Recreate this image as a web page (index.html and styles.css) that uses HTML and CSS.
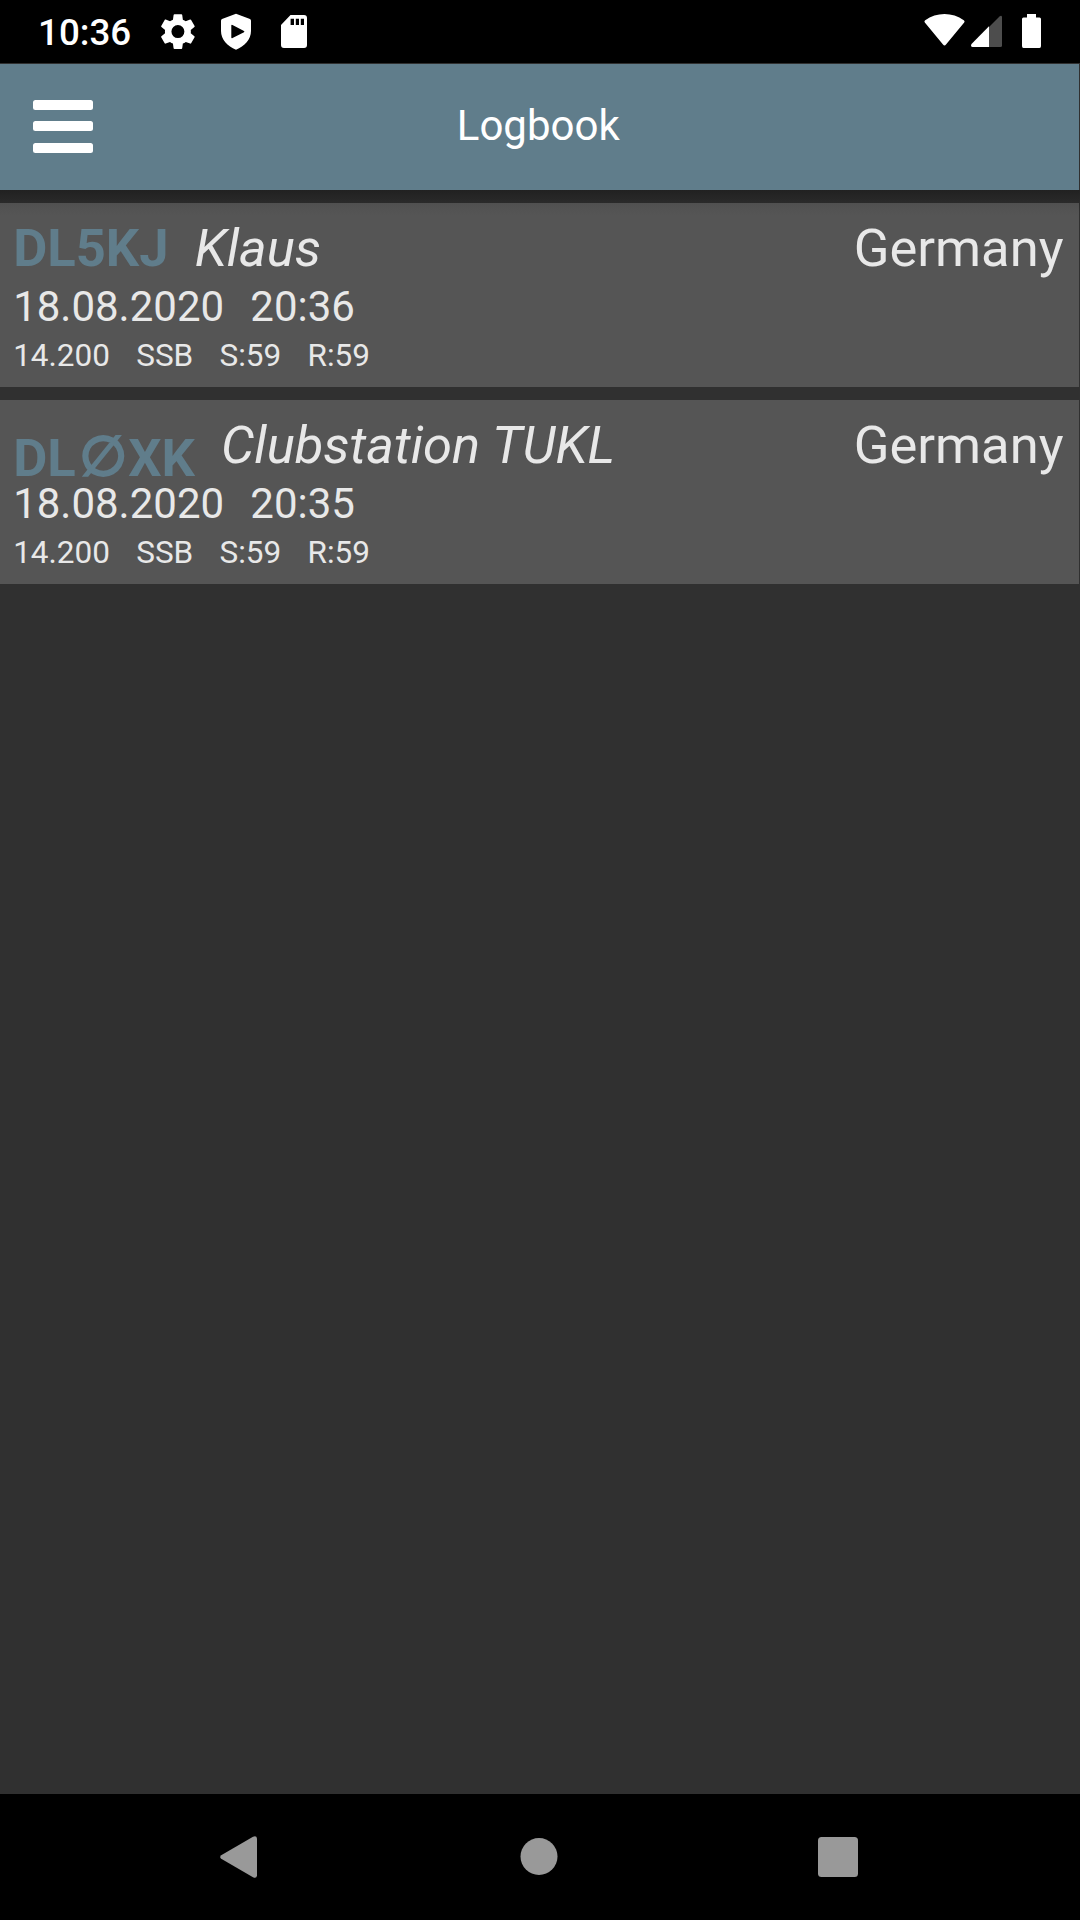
FILE: index.html
```html
<!DOCTYPE html>
<html lang="en">
<head>
<meta charset="utf-8">
<title>Logbook</title>
<link rel="stylesheet" href="styles.css">
</head>
<body>
<div class="status">
  <span class="clock">10:36</span>
  <svg class="icons-left" width="148" height="63" viewBox="160 0 148 63">
    <g transform="translate(156.3 10) scale(1.8)">
      <path fill="#fff" d="M19.14 12.94c.04-.3.06-.61.06-.94 0-.32-.02-.64-.07-.94l2.03-1.58a.49.49 0 0 0 .12-.61l-1.92-3.32a.488.488 0 0 0-.59-.22l-2.39.96c-.5-.38-1.03-.7-1.62-.94l-.36-2.54a.484.484 0 0 0-.48-.41h-3.84c-.24 0-.43.17-.47.41l-.36 2.54c-.59.24-1.13.57-1.62.94l-2.39-.96c-.22-.08-.47 0-.59.22L2.74 8.87c-.12.21-.08.47.12.61l2.03 1.58c-.05.3-.09.63-.09.94s.02.64.07.94l-2.03 1.58a.49.49 0 0 0-.12.61l1.92 3.32c.12.22.37.29.59.22l2.39-.96c.5.38 1.03.7 1.62.94l.36 2.54c.05.24.24.41.48.41h3.84c.24 0 .44-.17.47-.41l.36-2.54c.59-.24 1.13-.56 1.62-.94l2.39.96c.22.08.47 0 .59-.22l1.92-3.32c.12-.22.07-.47-.12-.61zM12 15.6A3.6 3.6 0 1 1 12 8.4a3.6 3.6 0 0 1 0 7.2z"/>
    </g>
    <path fill="#fff" fill-rule="evenodd" d="M236 13.7 250 19.1Q251 19.6 251 20.7V31C251 39.500 244.500 46.500 236 49.700 227.500 46.500 221 39.500 221 31V20.700Q221 19.600 222 19.100ZM231.300 25.300V37.500Q231.500 38.600 232.500 38L244 32.200Q244.800 31.600 244 31L232.500 25Q231.500 24.500 231.300 25.300Z"/>
    <path fill="#fff" fill-rule="evenodd" d="M290.500 15H304Q307 15 307 18V45Q307 48 304 48H284Q281 48 281 45V25ZM290.600 18.700V25H294V18.700ZM295.800 18.700V25H299V18.700ZM300.800 18.700V25H304V18.700Z"/>
  </svg>
  <svg class="icons-right" width="120" height="63" viewBox="922 0 120 63">
    <path fill="#fff" d="M924.800 22.500Q923.800 21.200 925.200 20.200C936.500 12 952.500 12 963.800 20.200Q965.200 21.200 964.200 22.500L946 44.500Q944.500 46.300 943 44.500Z"/>
    <path fill="#4d4d4d" d="M1002 16.900V45.500Q1002 47 1000.500 47H989V27L999.500 16.500Q1001.500 15 1002 16.900Z"/>
    <path fill="#fff" d="M989 26.300V47H972.500Q970.200 46.500 971.500 44Z"/>
    <path fill="#fff" d="M1027 14H1036V17.500H1039.500Q1041 17.500 1041 19V46Q1041 48 1039.500 48H1023.500Q1022 48 1022 46V19Q1022 17.500 1023.500 17.500H1027Z"/>
  </svg>
</div>
<header class="bar">
  <div class="menu"><i></i><i></i><i></i></div>
  <h1 class="title">Logbook</h1>
</header>
<main class="log">
  <article class="entry">
    <div class="head"><b class="call">DL5KJ</b><em class="name">Klaus</em><span class="country">Germany</span></div>
    <div class="when"><span>18.08.2020</span><span>20:36</span></div>
    <div class="details"><span>14.200</span><span>SSB</span><span>S:59</span><span>R:59</span></div>
  </article>
  <article class="entry">
    <div class="head"><b class="call low">DL<span class="zero">∅</span>XK</b><em class="name">Clubstation TUKL</em><span class="country">Germany</span></div>
    <div class="when"><span>18.08.2020</span><span>20:35</span></div>
    <div class="details"><span>14.200</span><span>SSB</span><span>S:59</span><span>R:59</span></div>
  </article>
</main>
<nav class="nav">
  <svg width="37" height="42" viewBox="0 0 37 42"><path fill="#999" d="M1.200 19.200 33 .8Q36.500-.8 37 2.500V39.500Q36.500 43 33 41.200L1.200 22.800Q-.8 21 1.200 19.200Z"/></svg>
  <svg width="41" height="38" viewBox="0 0 41 38"><circle cx="22" cy="18.500" r="18.500" fill="#999"/></svg>
  <svg width="40" height="40" viewBox="0 0 40 40"><rect width="40" height="40" rx="3.500" fill="#999"/></svg>
</nav>
</body>
</html>
```
FILE: styles.css
```css
* { box-sizing: border-box; }
body {
  margin: 0;
  height: 1920px;
  display: flex;
  flex-direction: column;
  background: #303030;
  color: #e8e8e8;
  font-family: Roboto, sans-serif;
}
.status {
  height: 63px;
  padding: 0 38px;
  display: flex;
  background: #000;
  color: #fff;
}
.clock {
  width: 122px;
  font-size: 36.75px;
  font-weight: 500;
  line-height: 65px;
}
.icons-right { margin-left: auto; }
.bar {
  height: 126px;
  margin: 1px 1px 0 0;
  padding: 0 33px 2px;
  display: grid;
  grid-template-columns: 60px 1fr 62.500px;
  align-items: center;
  background: #607d8b;
  color: #fff;
}
.menu {
  display: flex;
  flex-direction: column;
  gap: 11.500px;
}
.menu i {
  height: 10px;
  border-radius: 2.500px;
  background: #fff;
}
.title {
  margin: 0;
  font-size: 42px;
  font-weight: 400;
  line-height: 50px;
  text-align: center;
}
.log {
  flex: 1;
  padding: 13px 1px 0 0;
  display: flex;
  flex-direction: column;
  gap: 13px;
  background: linear-gradient(#212121, #303030 22px);
}
.entry {
  height: 184px;
  padding: 14px 15.500px 0 13.125px;
  background: #555;
}
.entry:first-child { background: linear-gradient(#505050, #555 12px); }
.head {
  height: 62px;
  display: flex;
  gap: 26.250px;
  font-size: 52.500px;
  line-height: 62px;
  white-space: nowrap;
}
.call { color: #607d8b; }
.low { padding-top: 13px; }
.zero {
  display: inline-block;
  width: 52.500px;
  font-family: "DejaVu Sans", sans-serif;
  font-weight: 400;
  line-height: 1;
  text-align: center;
  -webkit-text-stroke: 2.600px #607d8b;
  transform: translate(1px, -2px) scale(1.04);
}
.country { margin-left: auto; }
.when {
  margin-top: 3px;
  display: flex;
  gap: 26.250px;
  font-size: 42px;
  line-height: 49px;
}
.details {
  margin-top: 6px;
  display: flex;
  gap: 26.250px;
  font-size: 31.500px;
  line-height: 37px;
}
.nav {
  height: 126px;
  padding: 0 222px 0 220px;
  display: flex;
  align-items: center;
  justify-content: space-between;
  background: #000;
}
```
